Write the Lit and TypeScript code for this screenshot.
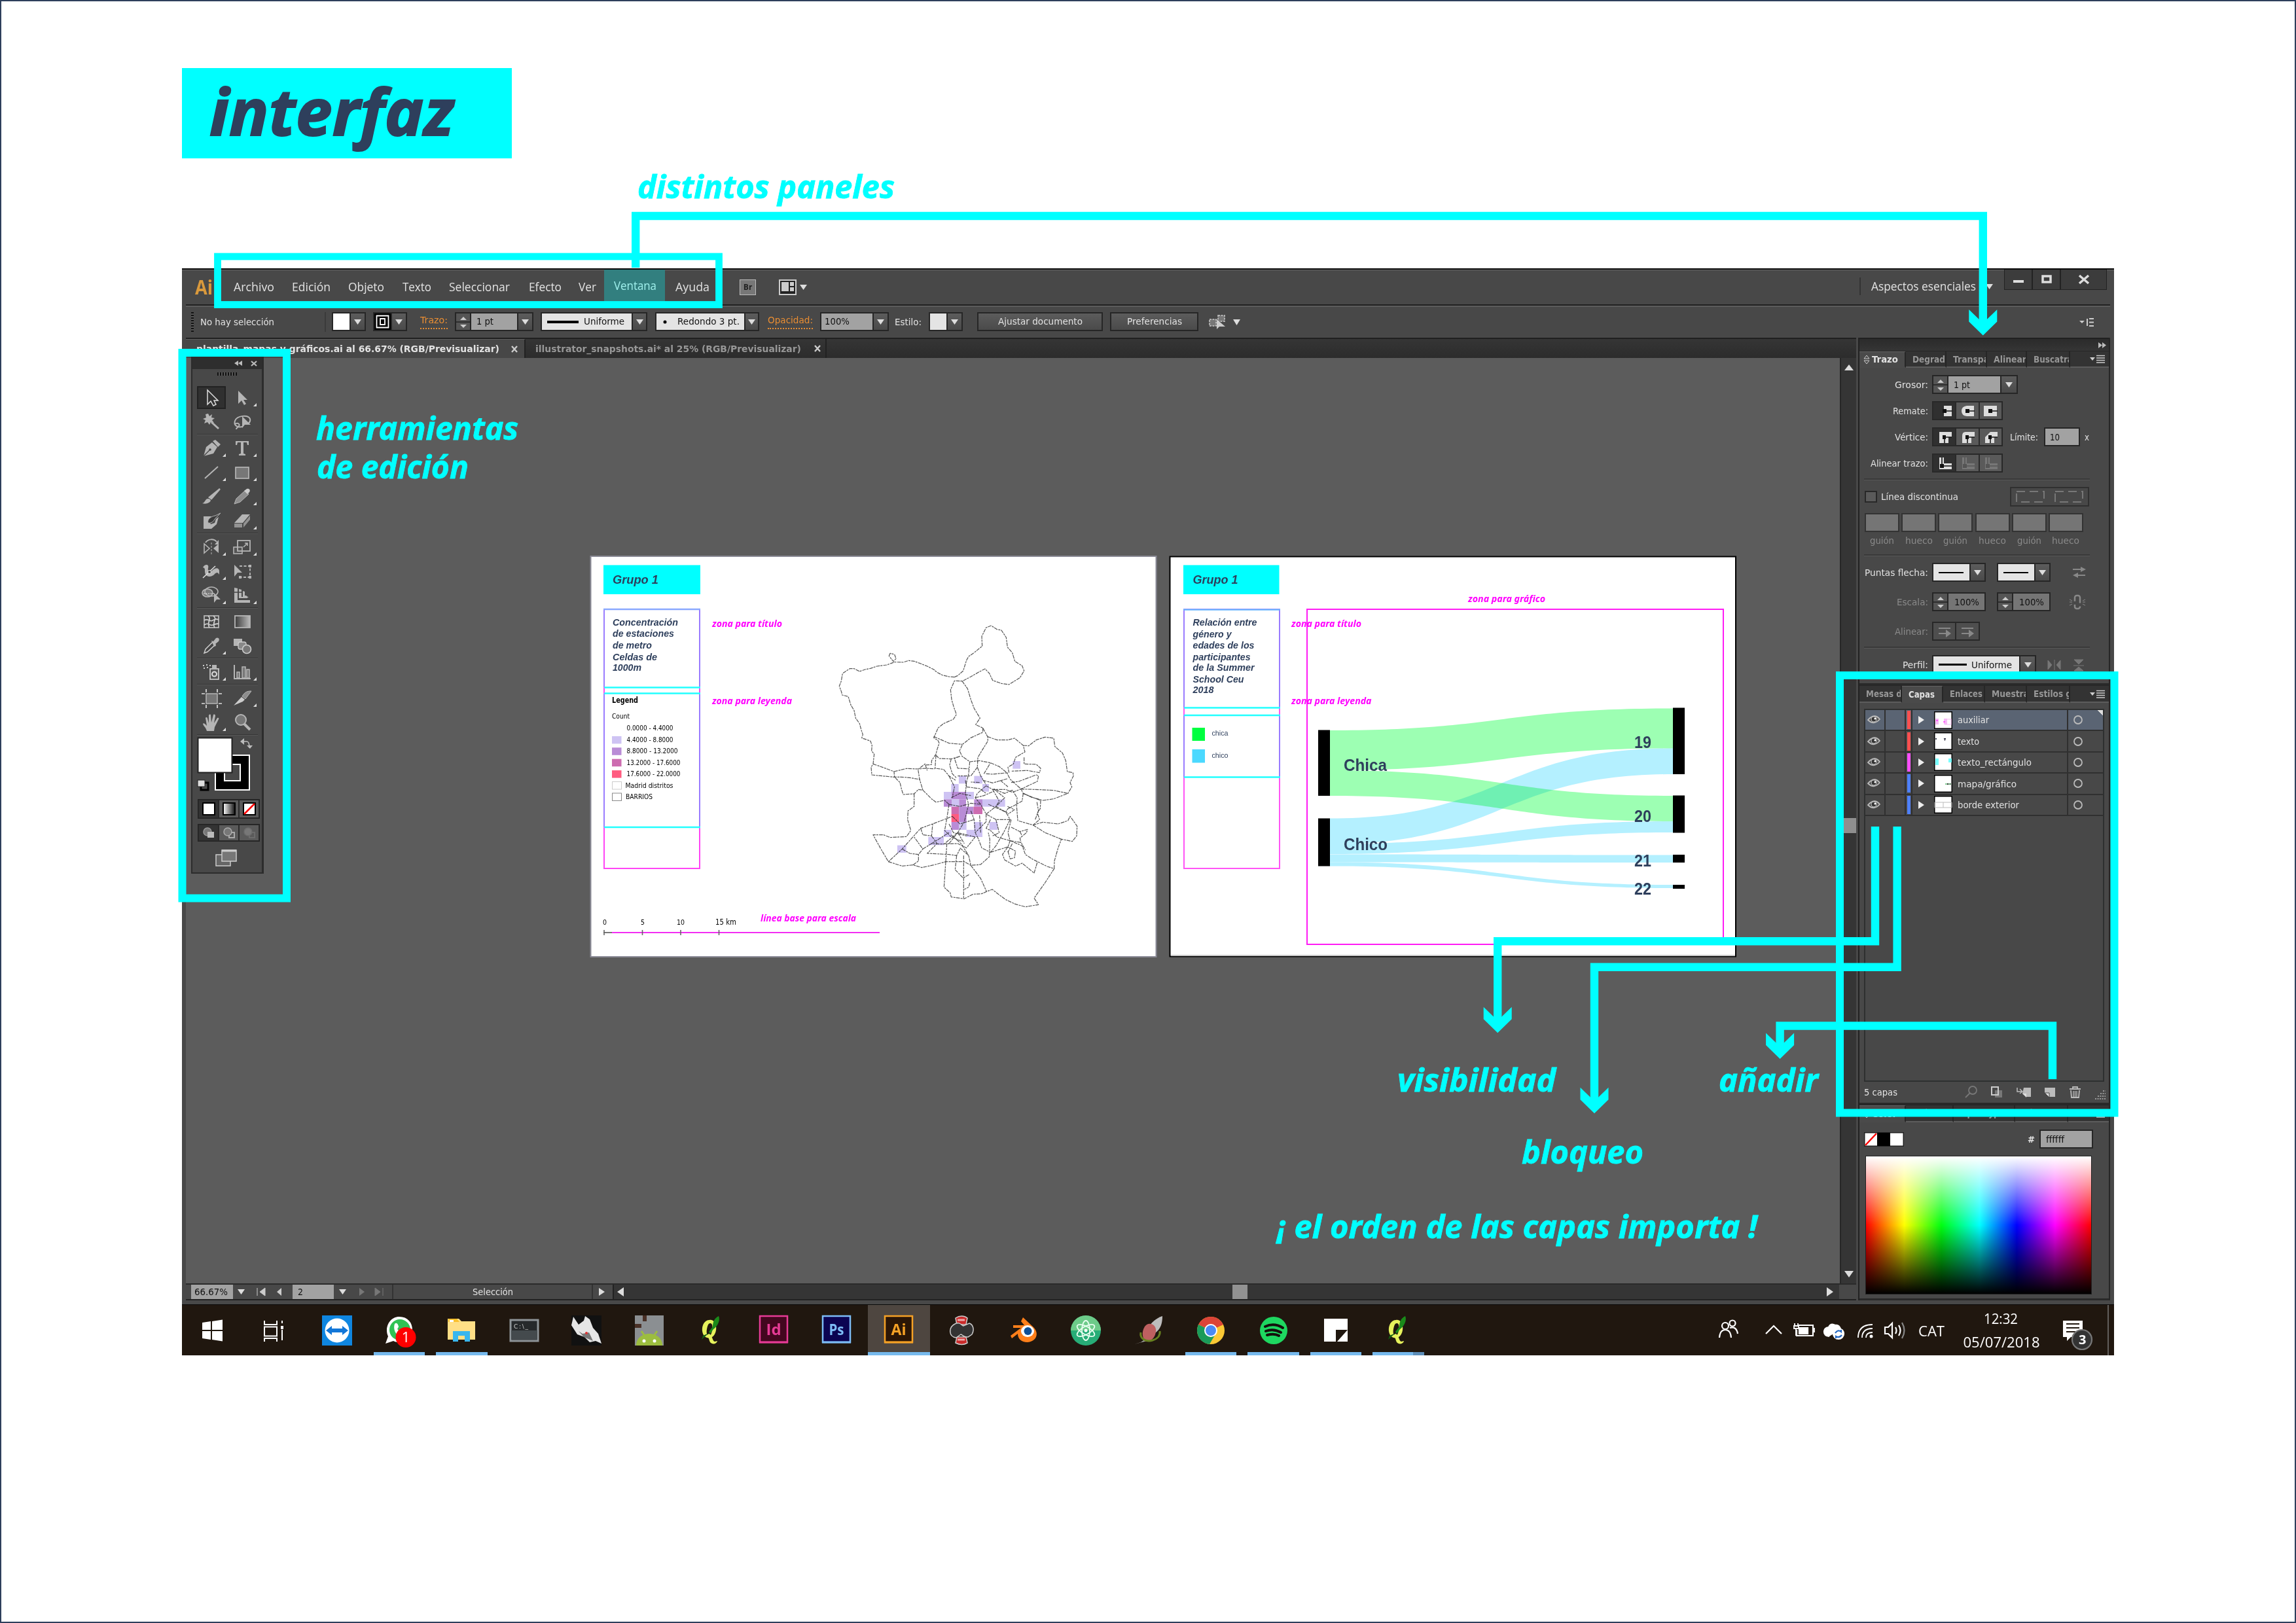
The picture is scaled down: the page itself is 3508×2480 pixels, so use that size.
import { LitElement, html, css, svg, nothing } from "lit";
import { customElement } from "lit/decorators.js";

/* Single line of text fitted to a given width; the baseline sits so that capitals are vertically centred. */
const fit = (text: string, width: number, size = 15, cls = "ui") => html`<svg class="fit" width=${width} height=${size * 1.4} viewBox="0 0 ${width} ${size * 1.4}"><text class=${cls} x="0" y=${size * 1.06} font-size=${size} textLength=${width} lengthAdjust="spacingAndGlyphs">${text}</text></svg>`;
const st = (text: string, x: number, y: number, w: number, size: number, cls: string) => svg`<text class=${cls} x=${x} y=${y} font-size=${size} textLength=${w} lengthAdjust="spacingAndGlyphs">${text}</text>`;
const icon = (w: number, h: number, body: unknown, cls = "") => html`<svg class="ico ${cls}" width=${w} height=${h} viewBox="0 0 ${w} ${h}">${body}</svg>`;

const down = icon(11, 8, svg`<path d="M0 0h11L5.500 8z" fill="#ddd"/>`);
const cross = icon(10, 11, svg`<path d="M1 1l8 9M9 1L1 10" stroke="#ccc" stroke-width="2.400"/>`);
const menuIco = icon(24, 13, svg`<path d="M0 4h8l-4 5z" fill="#ccc"/><path d="M10 1.500h13M10 5h13M10 8.500h13M10 12h13" stroke="#ccc" stroke-width="1.500"/>`);
const spin = html`<span class="spin">${icon(22, 26, svg`<path d="M6 10h10l-5-5zM6 17h10l-5 5z" fill="#ccc"/><path d="M0 13h22" stroke="#222" stroke-width="1.500"/>`)}</span>`;

/* Tool glyphs on a 34 x 28 box. */
const G = "#b5b5b5";
const tools: unknown[] = [
  svg`<path d="M11 2v22l5-5 4 7 4-2-3-6h6z" fill="#333" stroke="#ddd" stroke-width="1.500"/>`,
  svg`<path d="M11 3v20l5-5 4 7 3-2-4-6h6z" fill=${G}/>`,
  svg`<path d="M12 1l2 4 4-3-1 5 5 1-4 3 3 4-5-1-2 4-3-4-5 2 2-5-4-2 5-2-1-5z" fill=${G}/><path d="M17 14l11 10" stroke=${G} stroke-width="3"/>`,
  svg`<path d="M18 21C8 23 4 18 6 12 9 4 26 2 29 9c1 3-1 6-4 8M6 17c4-3 8 0 6 3s-4 2-4 5" fill="none" stroke=${G} stroke-width="2"/><path d="M17 5v18l4-5h9z" fill=${G}/>`,
  svg`<path d="M5 26L9 12l9-7 8 7-6 10z" fill=${G}/><path d="M19 3l4-2 8 7-4 4z" fill=${G}/><path d="M5 26l9-9" stroke="#444" stroke-width="1.200"/><circle cx="15" cy="16" r="1.800" fill="#444"/>`,
  svg`<path d="M7 3h20v6h-2l-1-4h-5v17l3 1v2H12v-2l3-1V5h-5l-1 4H7z" fill=${G}/>`,
  svg`<path d="M7 23L27 5" stroke=${G} stroke-width="2"/>`,
  svg`<rect x="7" y="6" width="20" height="17" fill="#777" stroke=${G} stroke-width="1.700"/>`,
  svg`<path d="M30 2L17 17l-3-2z" stroke=${G} stroke-width="2.500" fill=${G}/><path d="M3 24c5-1 4-7 9-7 5 1 5 4 1 6-3 2-7 2-10 1z" fill=${G}/>`,
  svg`<path d="M5 25l3-8L21 5l6 5-13 12z" fill="#8d8d8d" stroke=${G}/><path d="M20 5l4-3c4-1 6 2 4 5l-3 3z" fill="#ccc"/>`,
  svg`<path d="M5 7h12l-4 6 3 6 6-2 2-6 4-3-3 11-8 7H5z" fill=${G}/><path d="M12 17c-2-6 5-10 11-11l8-4-8 8c-3 5-6 8-11 7z" fill="#3a3a3a" stroke=${G}/>`,
  svg`<path d="M5 17L17 4h12L18 17z" fill=${G}/><path d="M5 18h12v6H5zM19 18L29 6v6L19 24z" fill="#929292"/>`,
  svg`<path d="M6 9v14l8-7z" fill="none" stroke=${G} stroke-width="1.600"/><path d="M28 9v14l-8-7z" fill=${G}/><path d="M17 7v18" stroke=${G} stroke-dasharray="3 2"/><path d="M8 7c4-6 13-6 17-1" fill="none" stroke=${G} stroke-width="2"/><path d="M28 3v7h-6z" fill=${G}/>`,
  svg`<rect x="4" y="14" width="13" height="10" fill="#555" stroke=${G} stroke-width="1.600"/><rect x="10" y="4" width="19" height="16" fill="none" stroke=${G} stroke-width="1.800"/><path d="M19 14l6-6m-4 0h4v4" fill="none" stroke=${G} stroke-width="1.600"/>`,
  svg`<path d="M4 8c3-6 10-5 8 1-1 5 2 7 6 4 5-5 10-5 11 0v6c-3-6-6-2-9 1-6 4-13 2-13-6 0-4 0-5-3-6z" fill=${G}/><path d="M4 24L23 6" stroke="#ddd" stroke-width="1.600"/><circle cx="14" cy="15" r="2.500" fill="#444" stroke="#ddd"/>`,
  svg`<path d="M5 4v18l5-6h7z" fill=${G}/><path d="M13 6h16v17H13" fill="none" stroke=${G} stroke-width="1.800" stroke-dasharray="4 2.500"/><path d="M27 4h4v4h-4zM27 21h4v4h-4zM12 21h4v4h-4z" fill=${G}/>`,
  svg`<ellipse cx="11" cy="10" rx="8" ry="6" fill="#777" stroke=${G} stroke-width="1.600"/><ellipse cx="17" cy="8" rx="10" ry="7" fill="none" stroke=${G} stroke-width="1.600"/><path d="M5 11h16" stroke="#eee" stroke-dasharray="2 1.500"/><path d="M21 10v15l4-5h6z" fill=${G}/>`,
  svg`<path d="M5 2l5 1v18H5zM12 4l4 1v11h9v2H12zM18 7l3 1v6h2l4 3h-9zM5 21h24v4H5z" fill=${G}/><path d="M5 9h12" stroke="#444" stroke-width="1.500"/>`,
  svg`<rect x="6" y="5" width="22" height="18" fill="none" stroke=${G} stroke-width="1.800"/><path d="M6 12c6-4 8 3 13 0s5-2 9-1M6 19c6-5 8 2 13 0s5-2 9-2M12 5c6 5-3 10 2 18M20 5c7 5-3 10 2 18" fill="none" stroke="#ccc" stroke-width="1.800"/>`,
  svg`<rect x="6" y="5" width="23" height="18" fill="url(#tg)" stroke=${G} stroke-width="1.800"/>`,
  svg`<path d="M6 25l2-6L19 8l4 4-12 11z" fill="#444" stroke="#ccc" stroke-width="1.500"/><path d="M17 6l3 1 4-5c4-2 6 2 4 5l-5 4 1 3-3 1z" fill=${G}/>`,
  svg`<rect x="4" y="3" width="13" height="11" fill=${G}/><rect x="11" y="8" width="12" height="11" rx="3" fill="#888" stroke="#ccc" stroke-width="1.300"/><circle cx="24" cy="19" r="6.500" fill="#777" stroke="#ccc" stroke-width="1.600"/>`,
  svg`<path d="M4 4h2M9 3h2M5 8h2M10 7h2M14 4h2" stroke="#ccc" stroke-width="2"/><rect x="15" y="9" width="13" height="16" fill="#555" stroke="#ccc" stroke-width="1.700"/><path d="M18 3h7v5h-7z" fill=${G}/><circle cx="21.500" cy="17" r="3.500" fill="none" stroke="#ddd" stroke-width="2"/>`,
  svg`<path d="M5 3v21h25" fill="none" stroke=${G} stroke-width="2"/><path d="M9 14h4v9H9zM17 6h5v17h-5zM24 10h4v13h-4z" fill="#777" stroke=${G} stroke-width="1.500"/>`,
  svg`<rect x="9" y="7" width="17" height="15" fill="#777" stroke=${G} stroke-width="1.500"/><path d="M2 7h5M28 7h5M2 22h5M28 22h5M9 0v5M26 0v5M9 24v5M26 24v5" stroke="#ddd" stroke-width="1.700"/>`,
  svg`<path d="M4 25L16 12l5 4-3 3z" fill="#ccc"/><path d="M17 11c4-7 8-8 14-8l-9 12z" fill="#8d8d8d" stroke=${G}/>`,
  svg`<path d="M10 27c-2-7-5-7-6-11 1-2 4 1 6 3L8 7c1-2 3-1 3 1l2 7V3c1-2 3-2 3 0l1 11 3-12c2-1 3 0 3 2l-2 11 5-8c2-1 3 1 2 2l-6 12-1 6z" fill=${G}/>`,
  svg`<circle cx="15" cy="10" r="8" fill="#777" stroke=${G} stroke-width="2"/><path d="M20 16l9 9" stroke=${G} stroke-width="4"/>`,
];
const hasFlyout = [0, 1, 0, 0, 1, 1, 1, 1, 0, 1, 0, 1, 1, 1, 1, 0, 1, 1, 0, 0, 1, 0, 1, 1, 0, 1, 1, 0];
const toolGroups = [[0, 4], [4, 12], [12, 18], [18, 22], [22, 24], [24, 28]];

const layers = [
  { name: "auxiliar", w: 48, c: "#ff5050", thumb: svg`<path d="M2 11h5v9H2zM15 11h5v9h-5z" fill="#f7baf7"/><rect x="17" y="12" width="9" height="8" fill="none" stroke="#f7baf7"/><path d="M3 14h3M14 16h3" stroke="#f0f"/>` },
  { name: "texto", w: 33, c: "#ff5050", thumb: svg`<path d="M2 10h2M15 10h3M16 12h1" stroke="#445" stroke-width="2"/>` },
  { name: "texto_rectángulo", w: 113, c: "#ff4fff", thumb: svg`<path d="M2 8h5v10H2zM22 8h5v6h-5z" fill="#7ff"/>` },
  { name: "mapa/gráfico", w: 90, c: "#4f80ff", thumb: svg`<path d="M17 14h9" stroke="#8c9" stroke-width="2"/><path d="M20 14h2M24 14h1" stroke="#333" stroke-width="2"/>` },
  { name: "borde exterior", w: 94, c: "#4f80ff", thumb: svg`<path d="M1 10h26v8H1zM14 10v8" fill="none" stroke="#bbb"/>` },
];

/* Outlines of the districts, in thirds of a pixel. */
const mapLines = [
  "M625 347L600 345 570 338 545 325 530 312 500 297 470 285 440 274 415 271 390 279 350 278 315 291 270 297 240 307 215 312 190 321 165 308 145 308 112 330 106 365 97 388 107 415 110 429 138 436 150 475 165 500 172 535 190 560 198 590 205 610 200 626 240 640 247 660 245 685 257 700 252 745 243 760 246 795 262 797 345 805 380 805 420 808 467 816",
  "M330 238L325 250 345 275 357 262 350 243Z",
  "M625 347L640 340 665 318 680 270 690 252 715 235 752 205 750 160 770 120 793 111 820 128 840 132 862 165 868 210 890 235 902 275 935 295 944 318 925 350 900 365 875 381 840 376 800 362 785 330 765 309 740 322 700 345 662 365 625 364 607 405 612 450 622 485 634 518 620 540 575 560 550 580 530 625 550 638 555 650 545 680 540 700 520 730 520 748 490 750",
  "M660 365L685 400 700 450 715 490 742 535 722 565 755 580 777 620 778 640 750 685 732 715 730 760 745 800 770 840",
  "M755 580L755 600 700 625 662 655 648 685 660 710 695 735 740 730 790 740 830 757 865 785 880 815 930 860",
  "M530 620L550 628 600 650 660 655M540 705L555 720 610 722 650 710M540 705L536 765 575 770 600 800 630 820M610 722L603 750 615 790 635 810M650 710L625 720 640 765 690 767M695 735L690 790 680 830",
  "M777 620L820 635 870 635 900 627 940 660 948 690 905 715 895 745 870 760 875 785M940 660L965 662 1000 635 1040 622 1080 627 1085 665 1120 695 1135 730 1142 780 1168 785 1170 800 1155 830 1163 850 1145 880 1080 905 1030 912 980 898 940 880 930 860 1020 863 1080 866 1145 880",
  "M944 715V745L1000 747 1020 765 1015 785 960 775 885 778M885 830L920 825 1000 795 1010 800 1005 825 930 860 890 875 860 862 800 862 770 845",
  "M252 745L300 762 348 780 350 805 375 830 382 860 390 885 440 882 460 862 480 865 465 815 458 770 490 745 500 775M348 780L405 766 460 768 490 765 536 767M480 865L520 905 540 920 580 912 600 930",
  "M440 882L440 940 412 960 410 1000 425 1050 405 1078 330 1082 300 1070 252 1070 285 1130 322 1193 385 1135 425 1090 470 1040 530 1018 590 995 615 985",
  "M322 1193L385 1213 435 1208 475 1220 530 1208 585 1193 670 1193 700 1210 745 1206 785 1170 787 1090 780 1060",
  "M435 1208L460 1190 460 1160 480 1135 440 1080M385 1135L420 1155 460 1160M470 1040L480 1070 520 1075 525 1020M480 1135L520 1110 560 1112 640 1110 680 1130 720 1080M520 1075L545 1110 500 1155 600 1160 635 1165 650 1135",
  "M585 1193L577 1310 605 1335 610 1355 670 1363 710 1342 750 1340 772 1330 798 1320 830 1345 860 1367 905 1388 950 1400 1010 1390 990 1360 1040 1290 1082 1225 1050 1215 985 1183 950 1160 935 1120 880 1097 820 1080 790 1050",
  "M700 1210L745 1270 772 1330M667 1165V1360M590 1110L585 1193M635 1165L628 1230 665 1268 695 1250M650 1130L690 1165 700 1210M695 1290L690 1310 670 1320M610 1070L655 1110 690 1165",
  "M1082 1225L1083 1190 1100 1130 1115 1090 1165 1100 1185 1075 1187 1030 1155 985 1145 1005 1100 1020 1030 1012 985 1025 915 1005 910 940 912 900 890 865",
  "M985 1025L1040 1060 1115 1090M940 880L935 915 900 935 870 950 860 965 880 1000 815 1000 770 975M1020 912L1018 950 1005 970 1015 1000 985 1025M940 880L975 895 1020 912",
  "M1003 920L1010 960 995 1000M868 940L900 955 870 975M890 865L855 880 805 860M880 1000L850 1060 815 1120 790 1150 750 1130 735 1090 720 1060M790 1150L870 1125 880 1097 870 1060 885 1000",
  "M870 1125L845 1160 855 1185 905 1213 935 1200 990 1245 1005 1195M870 1145L880 1180 900 1175 905 1145 870 1125M885 1035L925 1055 960 1045 955 1060 925 1085 930 1105M925 1055L935 1075",
  "M770 845L730 880 720 900 745 930 770 975 770 1010 720 1060M680 830L675 880 690 930 670 1010 640 1060 580 1110M600 930L590 995 580 1050 610 1080 660 1100M745 930L700 925 650 940 600 930",
  "M600 800L625 850 615 900M770 790L800 792 870 785M755 820L800 832 870 812M770 975L815 940 855 900 805 860M815 940L860 965M720 900L760 890 805 870M760 790L790 740M835 820L870 850",
  "M800 862L830 915 815 940M780 930L870 970M740 980L745 1060M700 960L715 1000 720 1060M640 1060L670 1110M600 1110L640 1060 720 1080M615 985L650 1020 715 1000M600 1020L620 1060 680 1075M520 1110L600 1060M680 850L740 858 770 880M675 820L680 850M730 760L700 800 640 800M740 830L700 828",
  "M890 1110L870 1150M880 1097L930 1105 950 1140M815 1000L830 1060 800 1075M790 1000L770 1040 790 1050M610 900L650 880 700 890",
];
const cells: [number, number, number, number, string][] = [
  [892, 732, 35, 35, "a"], [645, 800, 34, 35, "a"], [715, 800, 38, 35, "a"], [610, 837, 34, 36, "a"], [753, 837, 30, 35, "a"], [576, 873, 36, 34, "a"], [612, 873, 66, 34, "b"], [678, 873, 36, 34, "a"],
  [576, 907, 36, 34, "b"], [612, 907, 34, 34, "a"], [646, 907, 32, 34, "b"], [715, 907, 38, 34, "b"], [753, 907, 104, 34, "a"], [611, 941, 35, 34, "c"], [646, 941, 66, 34, "b"], [712, 941, 41, 34, "c"],
  [611, 975, 35, 36, "d"], [646, 975, 34, 36, "b"], [611, 1011, 35, 36, "b"], [646, 1011, 34, 36, "a"], [715, 1011, 38, 36, "a"], [785, 1011, 37, 36, "a"], [576, 1047, 36, 33, "a"], [680, 1047, 73, 33, "a"], [505, 1080, 71, 37, "a"], [363, 1118, 41, 34, "a"],
];
const cellColor: Record<string, string> = { a: "#cec3f3", b: "#b98cd6", c: "#cd6cb0", d: "#ff5c80" };

const board1 = svg`
  <rect x="902.500" y="851" width="864" height="612" fill="#fff" stroke="#8a8a96" stroke-width="2"/>
  <rect x="922" y="864.500" width="148" height="44.500" fill="#0ff"/>
  ${st("Grupo 1", 936, 892.5, 70, 19, "arbi navy")}
  <g fill="none" stroke-width="2"><path d="M923 932V1328H1069V932z" stroke="#ff45f5"/><path d="M923 933V1051M923 1061V1265M1069 933V1051M1069 1061V1265" stroke="#9a7cff"/><path d="M922 932h148" stroke="#8aa8ff" stroke-width="2.500"/><path d="M923 1051.500h147M923 1060.500h147M923 1265h147" stroke="#2ff" stroke-width="2.500"/></g>
  ${[["Concentración", 100, 956.7], ["de estaciones", 94, 974.3], ["de metro", 60, 992.2], ["Celdas de", 68, 1009.5], ["1000m", 44, 1026.3]].map(([t, w, y]) => st(t as string, 936, y as number, w as number, 14.5, "arbi navy"))}
  ${st("zona para título", 1088, 958.5, 107, 13.5, "note")}
  ${st("zona para leyenda", 1088, 1077, 122, 13.5, "note")}
  ${st("Legend", 935, 1075, 40, 12.5, "ui bold")}
  ${st("Count", 935, 1098.5, 27, 11, "ui")}
  ${[["0.0000 - 4.4000", 71, ""], ["4.4000 - 8.8000", 71, "#cec3f3"], ["8.8000 - 13.2000", 78, "#b98cd6"], ["13.2000 - 17.6000", 82, "#cd6cb0"], ["17.6000 - 22.0000", 82, "#ff5c80"]].map(([t, w, c], i) => svg`${c ? svg`<rect x="935" y=${1108.5 + i * 17.4} width="14.500" height="11.500" fill=${c}/>` : nothing}${st(t as string, 957.5, 1117 + i * 17.5, w as number, 10, "ui")}`)}
  <rect x="935.500" y="1195.500" width="14" height="11.500" fill="#fff" stroke="#ccc"/><rect x="935.500" y="1213" width="14" height="11.500" fill="#fff" stroke="#888"/>
  ${st("Madrid distritos", 955.5, 1204.500, 73, 10, "ui")}
  ${st("BARRIOS", 956, 1221.7, 41, 10, "ui")}
  <path d="M922 1426h14" stroke="#777" stroke-width="2"/><path d="M935 1426h409" stroke="#f22ef2" stroke-width="2"/><path d="M923 1422v8M981.500 1422v8M1040 1422v8M1098.500 1422v8" stroke="#666" stroke-width="1.600"/>
  ${st("0", 921, 1413.5, 6, 11, "ui")}${st("5", 979, 1413.5, 6, 11, "ui")}${st("10", 1034, 1413.5, 12, 11, "ui")}${st("15 km", 1093, 1413.5, 32, 11.5, "ui")}
  ${st("línea base para escala", 1162, 1408.7, 146, 13.5, "note")}
  <g transform="translate(1250 920) scale(.33333)">
    ${cells.map(([x, y, w, h, k]) => svg`<rect x=${x} y=${y} width=${w} height=${h} fill=${cellColor[k]}/>`)}
    ${mapLines.map((d) => svg`<path d=${d} fill="none" stroke="#2c2c2c" stroke-width="3.600" stroke-dasharray="17 4 9 3" stroke-opacity=".8" stroke-linejoin="round"/>`)}
  </g>`;

const band = (a: number, b: number, c: number, d: number, fill: string) => svg`<path d="M2032 ${a}C2294 ${a} 2294 ${c} 2556 ${c}V${d}C2294 ${d} 2294 ${b} 2032 ${b}Z" fill=${fill}/>`;
const board2 = svg`
  <rect x="1787.500" y="851.500" width="864.500" height="611" fill="#fff" stroke="#000" stroke-width="2"/>
  <path d="M1789 1461h862" stroke="#c8c8c8" stroke-width="2"/>
  <rect x="1808" y="864.500" width="146.500" height="44.500" fill="#0ff"/>
  ${st("Grupo 1", 1822.5, 892.5, 69, 19, "arbi navy")}
  <g fill="none" stroke-width="2"><path d="M1809 932V1328H1955V932z" stroke="#ff55f5"/><path d="M1809 933V1082M1809 1094V1189M1955 933V1082M1955 1094V1189" stroke="#9a7cff"/><path d="M1808 932.500h148" stroke="#6ab4ff" stroke-width="2.500"/><path d="M1809 1082.500h147M1809 1094h147M1809 1188.500h147" stroke="#2ff" stroke-width="2.500"/>
  <rect x="1997" y="932" width="636" height="512" stroke="#ff1cf5"/></g>
  ${[["Relación entre", 98, 957], ["género y", 59, 974.5], ["edades de los", 94, 992.3], ["participantes", 88, 1009.5], ["de la Summer", 94, 1026.4], ["School Ceu", 78, 1043.5], ["2018", 32, 1060.2]].map(([t, w, y]) => st(t as string, 1822.5, y as number, w as number, 14.5, "arbi navy"))}
  <rect x="1821.500" y="1113" width="19.500" height="20" fill="#00ff40"/><rect x="1821.500" y="1146" width="19.500" height="20.500" fill="#4bd9ff"/>
  ${st("chica", 1851.500, 1124.5, 25, 11, "ar navy")}${st("chico", 1851.500, 1158.5, 25, 11, "ar navy")}
  ${st("zona para título", 1973, 958.5, 107, 13.5, "note")}${st("zona para leyenda", 1973, 1077, 122.5, 13.5, "note")}${st("zona para gráfico", 2243, 920.5, 118, 13.5, "note")}
  ${band(1117, 1178, 1083.5, 1144.5, "#9dffb3")}${band(1178, 1217, 1217, 1256, "#9dffb3")}
  <g class="mult">${band(1251.5, 1291, 1144.5, 1184, "#b4f0ff")}</g>
  ${band(1290.5, 1306, 1256, 1273, "#b4f0ff")}${band(1306.5, 1318.5, 1307.5, 1319, "#b4f0ff")}${band(1318.5, 1324.5, 1353, 1358, "#b4f0ff")}
  <path d="M2014 1116.500h18v100.500h-18zM2014 1251.500h18v73h-18zM2556 1082.500h18v101.500h-18zM2556 1216.500h18v57h-18zM2556 1307h18v12h-18zM2556 1353h18v6h-18z"/>
  ${st("Chica", 2053, 1178.5, 66, 25, "ar bold navy")}${st("Chico", 2053, 1300, 67, 25, "ar bold navy")}
  ${st("19", 2497, 1144, 26, 25, "ar bold navy")}${st("20", 2497, 1256.7, 26, 25, "ar bold navy")}${st("21", 2497, 1324.5, 26, 25, "ar bold navy")}${st("22", 2497, 1368, 26, 25, "ar bold navy")}`;

/* Taskbar application glyphs on a 48 x 48 box. */
const adobe = (t: string, edge: string, bg: string) => svg`<rect x="3" y="2" width="42" height="40" fill=${bg} stroke=${edge} stroke-width="2.500"/><path d="M2 42h44" stroke=${edge} stroke-width="3"/><text x="24" y="31" text-anchor="middle" class="seg" font-weight="700" font-size="23" fill=${edge} textLength="23" lengthAdjust="spacingAndGlyphs">${t}</text>`;
const qgis = svg`<path d="M21 8c-8 0-12 9-11 17s7 12 13 10 9-10 8-17-5-11-10-10zm1 5c4 0 4 6 3 11s-2 8-5 8-4-5-3-10 2-9 5-9z" fill="#e6f25c"/><path d="M20 29c6 2 5 11 9 12l4-1c-1 5-8 6-11 2-2-4-2-9-6-10z" fill="#e6f25c"/><path d="M35 2c3 6-2 16-8 20l-5 7-2-3 6-8c0-8 3-13 9-16z" fill="#1a8a1a"/><path d="M20 28l-11 10 2-6z" fill="#125e12"/>`;
const apps: { g: unknown; u?: string }[] = [
  { g: svg`<rect x="1" y="1" width="46" height="46" fill="#0f86e0"/><circle cx="24" cy="24" r="18.500" fill="#fff"/><path d="M7 24l9-7v4h16v-4l9 7-9 7v-4H16v4z" fill="#1277d8"/>` },
  { g: svg`<path d="M24 3c13 0 20 9 20 20 0 12-10 19-20 19-4 0-7-1-9-2L3 44l4-11C1 20 9 3 24 3z" fill="#fff"/><circle cx="25" cy="23" r="16" fill="#2fc254"/><path d="M17 14c3-3 5 0 6 4 0 2-3 3-1 5 3 4 6 3 8 2l5 4-3 5c-8 3-19-8-15-20z" fill="#fff"/><circle cx="34" cy="34.500" r="15.500" fill="#f00"/><text x="34" y="42" text-anchor="middle" class="seg" font-size="22" fill="#fff">1</text>`, u: "on" },
  { g: svg`<path d="M3 6h17l4 4h21v28H3z" fill="#ffdf86"/><path d="M4 6h13l4 5H4z" fill="#fbc02d"/><path d="M6 8h6v3H6z" fill="#fff"/><path d="M11 41V25h26v16h-8v-9H19v9z" fill="#38b6ee"/>`, u: "on" },
  { g: svg`<rect x="3" y="8" width="42" height="32" fill="#26292b" stroke="#8e9498" stroke-width="3"/><path d="M4 24h40v14H4z" fill="#444a4d"/><text x="8" y="21" class="ui" font-size="9" fill="#ccc" textLength="22">C:\\_</text>` },
  { g: svg`<rect x="1" y="1" width="46" height="46" fill="#111"/><path d="M4 3l8 12 8-6 2-7 7 5 5 13 8 9 5 15-9-4-9 2-8-8-11-4-9-14z" fill="#e6e6e6"/><path d="M12 25l8 9 14 6-6-13-10 2z" fill="#777"/><circle cx="24" cy="28" r="2" fill="#d33"/>` },
  { g: svg`<rect x="2" y="1" width="44" height="46" fill="#8b8f92"/><path d="M14 1h6v9h-6zM2 14h10v6H2z" fill="#4a3026"/><path d="M4 47c0-24 40-24 40 0z" fill="#9cbd3f"/><path d="M12 25l5 7M36 25l-5 7" stroke="#9cbd3f" stroke-width="3"/><circle cx="16" cy="40" r="2.500" fill="#fff"/><circle cx="32" cy="40" r="2.500" fill="#fff"/>` },
  { g: qgis },
  { g: adobe("Id", "#e63b96", "#43071f") },
  { g: adobe("Ps", "#7dbdf7", "#0b0452") },
  { g: adobe("Ai", "#f5a125", "#2b1606"), u: "active" },
  { g: svg`<g stroke="#ccc" stroke-width="1.500"><path d="M15 5c6-4 13-4 18 0l-2 10H17z" fill="#c92a2a"/><path d="M15 43c6 3 13 3 18 0l-2-9H17z" fill="#c92a2a"/><path d="M14 14c7-4 10 2 13 3l9-4c6 2 8 10 4 17l-6 4c-6 1-8-3-11-4l-7 5C4 34 4 19 14 14z" fill="#333"/></g><path d="M18 8h11M18 38h11" stroke="#fff" stroke-opacity=".6" stroke-width="3"/>` },
  { g: svg`<path d="M4 32l16-12H8v-4h17l-5-6 3-6 16 15c9 9 5 22-9 23-10 0-15-6-15-13l-9 7z" fill="#ff7f1a"/><ellipse cx="30" cy="25" rx="10" ry="9" fill="#fff"/><circle cx="30.500" cy="25" r="6" fill="#0f4f96"/>` },
  { g: svg`<circle cx="24" cy="24" r="23" fill="#27ad77"/><path d="M1 24a23 23 0 0146 0z" fill="#86d68f" fill-opacity=".75"/><g fill="none" stroke="#e8fff0" stroke-width="1.800"><ellipse cx="24" cy="24" rx="6" ry="15"/><ellipse cx="24" cy="24" rx="6" ry="15" transform="rotate(60 24 24)"/><ellipse cx="24" cy="24" rx="6" ry="15" transform="rotate(-60 24 24)"/></g><circle cx="24" cy="24" r="2.500" fill="#fff"/>` },
  { g: svg`<path d="M45 2c0 15-5 23-15 28l-7-9C27 12 36 5 45 2z" fill="#bdbdbd"/><path d="M21 40L2 45l10-3 13-9z" fill="#aaa"/><path d="M18 18c6-9 19-3 17 8-1 9-8 16-16 15-5-6-6-15-1-23z" fill="#bf6060"/><path d="M12 27c-2 10 9 15 18 12 7-2 12-7 11-14" fill="none" stroke="#67801f" stroke-width="3"/>` },
  { g: svg`<circle cx="24" cy="24" r="21" fill="#fbc834"/><path d="M24 24L5 15A21 21 0 0143 15z" fill="#dc4437"/><path d="M24 24L5 15a21 21 0 0017 30l10-17z" fill="#1a9b5a"/><circle cx="24" cy="24" r="10" fill="#fff"/><circle cx="24" cy="24" r="8" fill="#4a8af4"/>`, u: "on" },
  { g: svg`<circle cx="24" cy="24" r="21" fill="#1ed760"/><path d="M11 18c9-4 19-3 27 2M12 25c8-3 16-2 23 2M14 31c7-2 13-2 18 1" fill="none" stroke="#14100c" stroke-width="4" stroke-linecap="round"/>`, u: "on" },
  { g: svg`<path d="M6 6h36v17H24v18H6z" fill="#fff"/><path d="M42 23L26 41h16z" fill="#fff"/>`, u: "on" },
  { g: qgis, u: "multi" },
];

const capIcons = [
  svg`<path d="M16 5h12v16H16zM14 10v6" fill="#ddd"/><path d="M18 13h11" stroke="#111" stroke-width="1.500"/><rect x="14" y="10" width="6" height="6" fill="#111"/>`,
  svg`<path d="M16 5h11v16H16q-8-1-8-8t8-8z" fill="#ddd"/><path d="M17 13h11" stroke="#111" stroke-width="1.500"/><rect x="14" y="10" width="6" height="6" fill="#111"/>`,
  svg`<path d="M7 5h20v16H7z" fill="#ddd"/><path d="M17 13h11" stroke="#111" stroke-width="1.500"/><rect x="14" y="10" width="6" height="6" fill="#111"/>`,
];
const joinIcons = ["M9 5h19v8h-5v9H9z", "M14 5h14v8h-5v9H9v-11q0-6 5-6z", "M17 5h11v8h-5v9H9v-9z"].map((d) => svg`<path d=${d} fill="#ddd"/><path d="M17 22v-9h11" fill="none" stroke="#111" stroke-width="1.500"/><rect x="14" y="10" width="5" height="6" fill="#111"/>`);
const alignIcons = ["#ddd", "#777", "#777"].map((c) => svg`<path d="M9 4h7v9h12v9H9z" fill=${c}/><path d="M13 4v13h15" fill="none" stroke=${c === "#ddd" ? "#111" : "#555"} stroke-width="1.600"/><rect x="10" y="14" width="6" height="6" fill=${c === "#ddd" ? "#111" : "#555"}/>`);
const trio = (list: unknown[], off = false) => html`<span class="trio">${list.map((g, i) => html`<span class="btn ${i === 0 ? "sel" : ""} ${off ? "off" : ""}">${icon(34, 26, g)}</span>`)}</span>`;

@customElement("app-root")
export class AppRoot extends LitElement {
  static styles = css`
    :host { display: block; width: 3508px; height: 2480px; background: #fff; }
    * { box-sizing: border-box; }
    .page { position: relative; width: 3508px; height: 2480px; border: 2px solid #2e3f5c; padding: 102px 0 0 276px; overflow: hidden; }
    .fit, .ico { display: block; flex: none; overflow: visible; }
    .defs { display: block; position: absolute; }
    .mult { mix-blend-mode: multiply; }
    .fit text { fill: #e2e2e2; }
    text.ui { font-family: "DejaVu Sans", "Noto Sans", sans-serif; }
    text.seg, text.menu, text.clock, text.logo { font-family: "Open Sans", "Noto Sans", sans-serif; }
    text.clock { fill: #fff; }
    text.bold { font-weight: 700; }
    .fit text.dim { fill: #979797; font-weight: 700; }
    .fit text.off { fill: #8a8a8a; }
    .fit text.dark { fill: #111; }
    .fit text.orange { fill: #e88d33; }
    .fit text.teal { fill: #9ff0ec; }
    .fit text.logo { fill: #d9993c; font-weight: 700; }
    text.ar { font-family: "Liberation Sans", sans-serif; }
    text.arbi { font-family: "Liberation Sans", sans-serif; font-weight: 700; font-style: italic; }
    text.note, text.cy { font-family: "Noto Sans", sans-serif; font-weight: 700; font-style: italic; fill: #f0f; }
    text.cy { fill: #0ff; stroke: #0ff; stroke-width: .8px; }
    text.navy { fill: #2e3f5c; }
    text.cy.navy { stroke: #2e3f5c; stroke-width: 2px; }
    .title { width: 504px; height: 138px; background: #0ff; }
    .shot { margin-top: 168px; width: 2952px; height: 1661px; display: flex; flex-direction: column; background: #484848; }
    .menubar { height: 55px; border-top: 2px solid #0a0a0a; box-shadow: inset 0 1px #6a6a6a; padding-left: 20px; display: flex; align-items: flex-start; }
    .menus { display: grid; grid-template-columns: 59px 89px 86px 83px 71px 122px 76px 39px 93px 16px; height: 53px; align-items: center; }
    .ventana { background: #327f7f; height: 49px; width: 93px; padding-left: 15px; display: flex; align-items: center; align-self: start; }
    .apptools { display: flex; align-items: center; gap: 5px; height: 53px; }
    .br { width: 25px; height: 24px; border: 1px solid #bbb; background: #777; margin-right: 30px; display: flex; align-items: center; justify-content: center; }
    .br .fit text { fill: #222; }
    .ws { margin-left: auto; display: flex; align-items: center; gap: 15px; padding-left: 16px; height: 27px; margin-top: 12px; border-left: 2px solid #333; width: 221px; }
    .winbtns { width: 157px; height: 31px; display: grid; grid-template-columns: 43px 43px 71px; background: #292929; margin-right: 11px; border-radius: 0 0 4px 4px; }
    .winbtns span { display: flex; justify-content: center; align-items: center; border: 1.500px solid #222; border-top: none; background: #3c3c3c; }
    .control { height: 51px; margin: 0 6px; border-top: 2px solid #222; box-shadow: inset 0 2px #5c5c5c; padding: 10px 0 0 8px; display: grid; grid-template-columns: 14px 201px 63px 72px 53px 131px 175px 172px 80px 114px 52px 74px 203px 151px 1fr 47px; align-items: start; }
    .control > * { height: 30px; }
    .vc { display: flex; align-items: center; }
    .grip { width: 4px; background: repeating-linear-gradient(#111 0 2px, #555 2px 4px); }
    .label1 { border-right: 2px solid #3a3a3a; width: 192px; }
    .combo { display: inline-flex; height: 29px; border: 2px solid #262626; background: #555; }
    .face { height: 100%; display: flex; align-items: center; background: #e4e4e4; border-right: 2px solid #262626; }
    .dd { flex: 1; display: flex; align-items: center; justify-content: center; background: linear-gradient(#5c5c5c, #4a4a4a); }
    .spin { width: 23px; height: 100%; background: #555; border-right: 2px solid #262626; display: block; flex: none; }
    .gray { background: #a2a2a2; }
    .mid { background: #757575; }
    .white { background: #fff; }
    .control .under { border-bottom: 2px dotted #e88d33; height: 26px; width: max-content; }
    .push { display: flex; justify-content: center; align-items: center; height: 29px; border: 2px solid #262626; background: linear-gradient(#5c5c5c, #4a4a4a); }
    .w52 { width: 52px; } .w120 { width: 120px; } .w163 { width: 163px; } .w159 { width: 159px; } .w105 { width: 105px; } .w192 { width: 192px; } .w135 { width: 135px; } .w130 { width: 131px; } .w82 { width: 82px; } .w159p { width: 159px; }
    .f27 { width: 27px; } .f73 { width: 72px; } .f139 { width: 139px; } .f135 { width: 136px; } .f80 { width: 80px; } .f81 { width: 81px; } .f57 { width: 57px; } .f133 { width: 133px; }
    .p8 { padding-left: 8px; }
    .body { flex: 1; min-height: 0; display: grid; grid-template-columns: 2552px 385px; column-gap: 3px; padding-left: 6px; }
    .main { display: grid; grid-template-rows: 31px 1414px 26px; height: 1471px; }
    .doctabs { background: linear-gradient(#353535, #2c2c2c); border-top: 2px solid #202020; display: flex; }
    .doctab { display: flex; align-items: center; border-right: 2px solid #222; padding-left: 16px; gap: 18px; }
    .doctab.on { background: #474747; width: 519px; border-top: 1px solid #5e5e5e; }
    .doctab.idle { width: 460px; gap: 20px; padding-left: 15px; }
    .work { display: grid; grid-template-columns: 2527px 25px; }
    .canvas { position: relative; background: #5c5c5c; padding: 301px 0 0 616px; display: flex; gap: 18px; }
    .boards { flex: none; display: block; }
    .vs { background: #353535; border-left: 2px solid #272727; display: flex; flex-direction: column; align-items: center; padding: 10px 0 9px; }
    .vthumb { margin: 684px 0 auto 2px; width: 20px; height: 23px; background: #8f8f8f; }
    .status { display: grid; grid-template-columns: 71px 29px 31px 24px 63px 39px 24px 26px 307px 30px 1fr 26px; align-items: stretch; background: #484848; border-top: 2px solid #2a2a2a; padding-left: 8px; border-bottom: 2px solid #222; }
    .status > span { display: flex; align-items: center; }
    .zoomf { padding-left: 5px; width: 64px; }
    .sel1 { border-left: 2px solid #333; border-right: 2px solid #333; justify-content: center; }
    .hs { background: #353535; border-left: 2px solid #222; justify-content: space-between; padding: 0 9px 0 5px; }
    .hthumb { width: 23px; height: 100%; background: #929292; margin-left: 45px; }
    .toolbox { position: absolute; left: 8px; top: -3px; width: 111px; height: 791px; background: #484848; border: 2px solid #2c2c2c; border-right-width: 3px; }
    .thead { height: 18px; background: #2e2e2e; display: flex; justify-content: flex-end; align-items: center; gap: 13px; padding-right: 7px; }
    .tgrip { width: 30px; height: 5px; margin: 5px auto 13px; background: repeating-linear-gradient(90deg, #111 0 2px, #555 2px 4px); }
    .tg { margin: 0 6px 0 7px; padding-top: 2px; display: grid; grid-template-columns: 47px 47px; grid-auto-rows: 37px; border-bottom: 1px solid #353535; box-shadow: 0 1px #585858; }
    .tool { display: flex; align-items: center; justify-content: center; position: relative; width: 44px; height: 35px; margin-top: 1px; }
    .tool.sel { background: #303030; border: 2px solid #222; }
    .fly { position: absolute; right: 0; bottom: 4px; }
    .paint { display: block; margin: 3px 0 0 5px; }
    .threes { display: grid; grid-template-columns: 31px 31px 31px; margin: 7px 0 0 8px; border: 1px solid #222; width: 95px; }
    .threes span { display: flex; align-items: center; justify-content: center; height: 28px; background: #5a5a5a; border: 1px solid #2a2a2a; }
    .threes span:first-child { background: #333; }
    .threes.low { margin-top: 8px; }
    .threes.low span { height: 25px; }
    .screen { display: block; margin: 11px auto 0 35px; }
    .dock { display: grid; grid-template-rows: 20px 511px 641px 299px; height: 1471px; background: #484848; border-left: 2px solid #222; border-right: 2px solid #262626; }
    .dhead { background: linear-gradient(#2b2b2b, #353535); border-top: 2px solid #202020; display: flex; justify-content: flex-end; align-items: center; padding-right: 4px; }
    .panel { border-bottom: 3px solid #292929; overflow: hidden; }
    .ptabs { height: 26px; display: grid; background: #333; border-top: 1px solid #262626; }
    .t1 { grid-template-columns: 71px 62px 62px 61px 66px 1fr; }
    .t2 { grid-template-columns: 65px 63px 64px 64px 66px 1fr; height: 27px; }
    .t3 { grid-template-columns: 71px 73px 94px 81px 1fr; height: 27px; }
    .ptab { border-right: 2px solid #262626; border-bottom: 2px solid #5c5c5c; display: flex; align-items: center; padding-left: 10px; overflow: hidden; }
    .ptab.on { background: #4a4a4a; border-bottom-color: #4a4a4a; border-top: 1px solid #646464; gap: 4px; }
    .ptab.l8 { padding-left: 7px; }
    .ptab.last { border-right: none; justify-content: flex-end; padding-right: 5px; }
    .row { display: grid; grid-template-columns: 105px 1fr; column-gap: 6px; height: 29px; align-items: center; }
    .row > .lab { justify-self: end; }
    .row > .cont { display: flex; align-items: center; height: 29px; }
    .r1 { margin-top: 11px; } .r2 { margin-top: 11px; } .r4 { margin-top: 16px; } .r5 { margin-top: 16px; }
    .trio { display: flex; border: 1px solid #262626; }
    .btn { width: 35.400px; height: 27px; border: 1px solid #2a2a2a; background: #5a5a5a; display: flex; align-items: center; justify-content: center; }
    .btn.sel { background: #303030; }
    .btn.off { background: #4e4e4e; }
    .lim { margin: 0 9px 0 11px; }
    .field { border: 2px solid #262626; height: 29px; width: 55px; padding-left: 7px; display: flex; align-items: center; margin-right: 7px; }
    .hr { margin: 9px 29px 0 7px; height: 2px; background: #393939; box-shadow: 0 1px #585858; }
    .dashrow { display: flex; align-items: center; margin: 11px 0 0 8px; height: 30px; }
    .check { width: 19px; height: 18px; border: 2px solid #282828; background: #5a5a5a; margin-right: 6px; }
    .dbl { display: flex; margin-left: 79px; border: 2px solid #303030; height: 30px; width: 121px; justify-content: space-around; align-items: center; }
    .six { display: grid; grid-template-columns: repeat(6, 53px); column-gap: 3.200px; margin: 10px 0 0 8px; }
    .six .box { height: 29px; border: 2px solid #333; background: #757575; }
    .six .cap { display: flex; justify-content: center; height: 25px; align-items: center; }
    .g17 { margin-left: 17px; }
    .list { margin: 9px 0 0 7px; width: 367px; height: 570px; border: 2px solid #2e3030; }
    .layer { display: grid; grid-template-columns: 31px 31px 10px 33px 36px 169px 1fr; height: 32.400px; border-bottom: 2px solid #303030; align-items: center; }
    .layer.on { background: #5a6473; background-image: linear-gradient(225deg, #ddd 6px, transparent 6px); }
    .layer > span { display: flex; align-items: center; height: 100%; }
    .vline { border-right: 2px solid #303030; }
    .chip { width: 5px; height: 28px; margin: 0 auto; }
    .arrow { padding-left: 8px; }
    .foot { display: flex; align-items: center; height: 32px; padding-left: 7px; }
    .foot .fit { margin-right: 102px; }
    .foot .ico { margin-right: 15.500px; }
    .hexrow { display: flex; align-items: center; margin: 11px 0 0 7px; height: 29px; }
    .sw { margin-right: 189px; }
    .spectrum { margin: 11px 0 0 9px; width: 346px; height: 212px; border: 1px solid #222; background: linear-gradient(#fff, transparent 50%), linear-gradient(transparent 50%, #000), linear-gradient(90deg, #f00, #ff0 17%, #0f1 33.500%, #0ff 50.500%, #00f 67%, #f0f 84%, #f00); }
    .frame { height: 5px; background: #484848; border-bottom: 1px solid #0a0a0a; }
    .taskbar { height: 77px; background: #20170f; display: flex; color: #fff; overflow: hidden; }
    .cell { width: 95.400px; display: flex; flex-direction: column; align-items: center; }
    .cell .ico { margin-top: 15px; }
    .cell.sys { width: 94.500px; }
    .cell.active { background: #4e4640; }
    .bar { margin-top: auto; height: 5px; width: 78.500px; background: #76b9ed; }
    .cell.active .bar { width: 100%; }
    .cell.multi .bar { background: linear-gradient(90deg, #76b9ed 79%, #5c8db8 79%); }
    .tray { margin-left: 435px; padding-top: 5px; }
    .overlay { position: absolute; left: -2px; top: -2px; }
  `;

  private control() {
    const dd = html`<span class="dd">${down}</span>`;
    return html`<div class="control">
      <span class="grip"></span>
      <span class="vc label1">${fit("No hay selección", 113, 14.5)}</span>
      <span class="combo w52"><span class="face white f27"></span>${dd}</span>
      <span class="combo w52"><span class="face f27">${icon(25, 25, svg`<path d="M0 0h25v25H0z"/><path d="M3.500 3.500h18v18h-18zM9 8h7v9H9z" fill="none" stroke="#fff" stroke-width="1.800"/>`)}</span>${dd}</span>
      <span class="vc under">${fit("Trazo:", 42, 14.5, "ui orange")}</span>
      <span class="combo w120">${spin}<span class="face gray f73 p8">${fit("1 pt", 26, 14.5, "ui dark")}</span>${dd}</span>
      <span class="combo w163"><span class="face f139 p8">${icon(56, 6, svg`<path d="M0 1h48v4H0z"/>`)}${fit("Uniforme", 62, 14.5, "ui dark")}</span>${dd}</span>
      <span class="combo w159"><span class="face f135 p8">${icon(24, 6, svg`<circle cx="5" cy="3" r="2.500"/>`)}${fit("Redondo 3 pt.", 95, 14.5, "ui dark")}</span>${dd}</span>
      <span class="vc under">${fit("Opacidad:", 69, 14.5, "ui orange")}</span>
      <span class="combo w105"><span class="face gray f80">${icon(5, 5, nothing)}${fit("100%", 38, 14.5, "ui dark")}</span>${dd}</span>
      <span class="vc">${fit("Estilo:", 41, 14.5)}</span>
      <span class="combo w52"><span class="face f27"></span>${dd}</span>
      <span class="push w192">${fit("Ajustar documento", 129, 14.5)}</span>
      <span class="push w135">${fit("Preferencias", 84, 14.5)}</span>
      <span class="vc">${icon(50, 24, svg`<path d="M1 8h10v10H1zM14 2h10v9H14z" fill="#777" stroke="#ccc" stroke-width="1.500" stroke-dasharray="3 1.500"/><path d="M12 8v15l4-4h9z" fill="#ccc"/><path d="M37 8h11l-5.500 9z" fill="#ddd"/>`)}</span>
      <span class="vc">${icon(22, 14, svg`<path d="M0 5h8L4 9z" fill="#ccc"/><path d="M12 2v11M15 2h7M15 7.500h7M15 13h7" stroke="#ccc" stroke-width="2"/>`)}</span>
    </div>`;
  }

  private toolbox() {
    return html`<div class="toolbox">
      <div class="thead">${icon(12, 8, svg`<path d="M6 0v8L0 4zM12 0v8L6 4z" fill="#bbb"/>`)}${icon(10, 9, svg`<path d="M1 1l8 7M9 1L1 8" stroke="#bbb" stroke-width="2.200"/>`)}</div>
      <div class="tgrip"></div>
      ${toolGroups.map(([a, b]) => html`<div class="tg">${tools.slice(a, b).map((g, i) => html`<span class="tool ${a + i === 0 ? "sel" : ""}">${icon(34, 28, g)}${hasFlyout[a + i] ? html`<svg class="fly" width="5" height="5"><path d="M5 0v5H0z" fill="#ddd"/></svg>` : nothing}</span>`)}</div>`)}
      ${icon(100, 88, svg`<rect x="30" y="28" width="52" height="53" fill="#000" stroke="#fff" stroke-width="2"/><rect x="44" y="42" width="24" height="25" fill="#484848" stroke="#fff" stroke-width="2"/><rect x="3.500" y="1.500" width="52" height="53" fill="#fff" stroke="#222" stroke-width="2"/><path d="M70 7h8q4 0 4 10" fill="none" stroke="#bbb" stroke-width="1.600"/><path d="M74 2v10l-6-5zM78 13h9l-4 5z" fill="#bbb"/><rect x="8" y="70" width="11" height="11" fill="none" stroke="#000" stroke-width="3"/><rect x="3" y="66" width="11" height="10" fill="#ddd" stroke="#222"/>`, "paint")}
      <div class="threes"><span>${icon(20, 20, svg`<rect x="1" y="1" width="18" height="18" fill="#fff" stroke="#000" stroke-width="2"/>`)}</span><span>${icon(20, 20, svg`<rect x="1" y="1" width="18" height="18" fill="url(#wg)" stroke="#000" stroke-width="2"/>`)}</span><span>${icon(20, 20, svg`<rect x="1" y="1" width="18" height="18" fill="#fff" stroke="#000" stroke-width="2"/><path d="M2 18L18 2" stroke="red" stroke-width="2.500"/>`)}</span></div>
      <div class="threes low">${[["#999", 1], ["#aaa", 0], ["#6c6c6c", 0]].map(([c, r]) => html`<span>${icon(18, 18, svg`<circle cx="7" cy="7" r="6" fill="#777" stroke=${c} stroke-width="1.500"/>${r ? svg`<rect x="7" y="7" width="10" height="9" fill="#bbb"/>` : svg`<path d="M12 8h5v8H9v-3" fill="none" stroke=${c} stroke-width="2"/>`}`)}</span>`)}</div>
      ${icon(33, 28, svg`<rect x="1" y="9" width="22" height="17" fill="#666" stroke="#ccc" stroke-width="1.500"/><rect x="10" y="2" width="22" height="17" fill="#777" stroke="#ccc" stroke-width="1.500"/><path d="M10 3h22" stroke="#ccc" stroke-width="3"/>`, "screen")}
    </div>`;
  }

  private strokePanel() {
    const dd = html`<span class="dd">${down}</span>`;
    const off = "#777";
    return html`<div class="panel">
      <div class="ptabs t1">
        <span class="ptab on l8">${icon(8, 13, svg`<path d="M0 5h8L4 0zM0 8h8l-4 5z" fill="none" stroke="#ccc"/>`)}${fit("Trazo", 40, 14, "ui bold")}</span>
        <span class="ptab">${fit("Degrad", 50, 14, "ui dim")}</span><span class="ptab">${fit("Transpa", 55, 14, "ui dim")}</span><span class="ptab">${fit("Alinear", 50, 14, "ui dim")}</span><span class="ptab">${fit("Buscatra", 60, 14, "ui dim")}</span><span class="ptab last">${menuIco}</span>
      </div>
      <div class="row r1"><span class="lab">${fit("Grosor:", 51, 14)}</span><span class="cont"><span class="combo w130">${spin}<span class="face gray f81 p8">${fit("1 pt", 25, 14, "ui dark")}</span>${dd}</span></span></div>
      <div class="row r2"><span class="lab">${fit("Remate:", 54, 14)}</span><span class="cont">${trio(capIcons)}</span></div>
      <div class="row r2"><span class="lab">${fit("Vértice:", 51, 14)}</span><span class="cont">${trio(joinIcons)}<span class="lim">${fit("Límite:", 43, 14)}</span><span class="field gray">${fit("10", 15, 14, "ui dark")}</span>${fit("x", 7, 14)}</span></div>
      <div class="row r2"><span class="lab">${fit("Alinear trazo:", 88, 14)}</span><span class="cont">${trio(alignIcons)}</span></div>
      <div class="hr"></div>
      <div class="dashrow"><span class="check"></span>${fit("Línea discontinua", 118, 14)}<span class="dbl">${[0, 1].map(() => icon(44, 18, svg`<rect x="1" y="1" width="42" height="16" fill="none" stroke=${off} stroke-width="2" stroke-dasharray="13 7"/>`))}</span></div>
      <div class="six">${[0, 1, 2, 3, 4, 5].map(() => html`<span class="box"></span>`)}${[0, 1, 2, 3, 4, 5].map((i) => html`<span class="cap">${i % 2 ? fit("hueco", 42, 14, "ui off") : fit("guión", 37, 14, "ui off")}</span>`)}</div>
      <div class="hr"></div>
      <div class="row r1"><span class="lab">${fit("Puntas flecha:", 97, 14)}</span><span class="cont">${[0, 1].map((i) => html`<span class="combo w82 ${i ? "g17" : ""}"><span class="face f57 p8">${icon(38, 4, svg`<path d="M0 1h38v2H0z"/>`)}</span>${dd}</span>`)}${icon(54, 18, svg`<path d="M34 4h12M42 13h11" stroke="#888" stroke-width="2"/><path d="M46 0v8l8-4zM42 9v8l-8-4z" fill="#888"/>`)}</span></div>
      <div class="row r4"><span class="lab">${fit("Escala:", 48, 14, "ui off")}</span><span class="cont">${[0, 1].map((i) => html`<span class="combo w82 ${i ? "g17" : ""}">${spin}<span class="dd mid">${fit("100%", 38, 14, "ui dark")}</span></span>`)}${icon(54, 24, svg`<rect x="37" y="2" width="8" height="20" rx="3" fill="none" stroke="#888" stroke-width="2.500" stroke-dasharray="15 5"/><path d="M29 8l4 2M29 12h4M29 17l4-2M49 10l4-2M49 12h4M49 15l4 2" stroke="#888"/>`)}</span></div>
      <div class="row r5"><span class="lab">${fit("Alinear:", 51, 14, "ui off")}</span><span class="cont">${trio([0, 1].map(() => svg`<path d="M8 8h18M8 16h12" stroke="#888" stroke-width="2"/><path d="M19 10v12l8-6z" fill="#888"/>`), true)}</span></div>
      <div class="hr"></div>
      <div class="row r1"><span class="lab">${fit("Perfil:", 39, 14)}</span><span class="cont"><span class="combo w159p"><span class="face f133 p8">${icon(50, 4, svg`<path d="M0 0h43v3H0z"/>`)}${fit("Uniforme", 62, 14, "ui dark")}</span>${dd}</span>${icon(76, 22, svg`<path d="M18 4v14l6-7zM37 4v14l-6-7zM28 3v16" fill="#777" stroke="#777"/><path d="M58 3h14l-7 7zM57 12h16M58 20h14l-7-6z" fill="#777" stroke="#777"/>`)}</span></div>
    </div>`;
  }

  private layersPanel() {
    return html`<div class="panel">
      <div class="ptabs t2">
        <span class="ptab">${fit("Mesas de", 63, 14, "ui dim")}</span><span class="ptab on">${fit("Capas", 40, 14, "ui bold")}</span><span class="ptab">${fit("Enlaces", 50, 14, "ui dim")}</span><span class="ptab">${fit("Muestra", 57, 14, "ui dim")}</span><span class="ptab">${fit("Estilos gr", 64, 14, "ui dim")}</span><span class="ptab last">${menuIco}</span>
      </div>
      <div class="list">${layers.map((l, i) => html`<div class="layer ${i === 0 ? "on" : ""}">
        <span class="vline">${icon(28, 20, svg`<path d="M4 10q10-11 18-1-9 10-18 1z" fill="#555" stroke="#bbb" stroke-width="1.800"/><circle cx="13" cy="9" r="4" fill="#333" stroke="#bbb"/><circle cx="15" cy="8" r="1.600" fill="#fff"/>`)}</span>
        <span class="vline"></span><span class="vline"><span class="chip" style="background:${l.c}"></span></span>
        <span class="arrow">${icon(10, 14, svg`<path d="M1 1l9 6-9 6z" fill="#eee"/>`)}</span>
        <span>${icon(28, 27, svg`<rect x=".750" y=".750" width="26.500" height="25.500" fill="#fff" stroke="#000" stroke-width="1.500"/>${l.thumb}`)}</span>
        <span class="vline">${fit(l.name, l.w, 14)}</span>
        <span>${icon(24, 16, svg`<circle cx="15" cy="8" r="6" fill="none" stroke="#bbb" stroke-width="1.800"/>`)}</span>
      </div>`)}</div>
      <div class="foot">${fit("5 capas", 51, 14)}
        ${icon(22, 20, svg`<circle cx="13" cy="7" r="6" fill="none" stroke="#777" stroke-width="1.800"/><path d="M9 11l-7 7" stroke="#777" stroke-width="2"/>`)}
        ${icon(22, 20, svg`<path d="M9 7h11v11H9z" fill="#777"/><path d="M4 2h10v12H4z" fill="none" stroke="#ccc" stroke-width="2"/>`)}
        ${icon(28, 20, svg`<path d="M6 3v6h7M10 5l4 4-4 3" fill="none" stroke="#bbb" stroke-width="1.500"/><path d="M16 3h11v14H20l-6-5z" fill="#bbb"/><path d="M14 12h6v6z" fill="#ddd"/>`)}
        ${icon(24, 20, svg`<path d="M4 3h16v14h-9l-7-6z" fill="#bbb"/><path d="M4 11h7v7z" fill="#ddd" stroke="#444"/>`)}
        ${icon(22, 20, svg`<path d="M3 5h17M8 4V2h7v2M5 7l1 11h11l1-11" fill="none" stroke="#bbb" stroke-width="1.800"/><path d="M9 8v9M11.500 8v9M14 8v9" stroke="#bbb" stroke-width="1.300"/>`)}
        ${icon(20, 20, svg`<path d="M4 20h16M8 16h12M12 12h8M16 8h4" stroke="#999" stroke-width="2" stroke-dasharray="2 1.500"/>`)}
      </div>
    </div>`;
  }

  private colorPanel() {
    return html`<div class="panel">
      <div class="ptabs t3"><span class="ptab on l8">${icon(8, 13, svg`<path d="M0 5h8L4 0zM0 8h8l-4 5z" fill="none" stroke="#ccc"/>`)}${fit("Color", 38, 14, "ui bold")}</span><span class="ptab">${fit("Guía de", 50, 14, "ui dim")}</span><span class="ptab">${fit("OpenType", 68, 14, "ui dim")}</span><span class="ptab">${fit("Párrafo", 52, 14, "ui dim")}</span><span class="ptab last">${menuIco}</span></div>
      <div class="hexrow">${icon(61, 22, svg`<rect x=".750" y=".750" width="59.500" height="20.500" fill="#fff" stroke="#222" stroke-width="1.500"/><path d="M20 1h20v20H20z"/><path d="M2 20L19 2" stroke="red" stroke-width="2.500"/>`, "sw")}${fit("#", 11, 14, "ui bold")}${icon(7, 4, nothing)}<span class="combo w82 gray"><span class="p8 vc">${fit("ffffff", 28, 14, "ui dark")}</span></span></div>
      <div class="spectrum"></div>
    </div>`;
  }

  private taskbar() {
    return html`<div class="taskbar">
      <div class="cell sys">${icon(48, 48, svg`<path d="M8 12l13-2v13H8zM23 10l16-2.500V23H23zM8 25h13v13L8 36zM23 25h16v15.500L23 38z" fill="#fff"/>`)}</div>
      <div class="cell sys">${icon(48, 48, svg`<path d="M8 9v6h19V9M8 18.500h19v14H8zM8 41v-5h19v5M35 9v4M35 23v16" fill="none" stroke="#fff" stroke-width="2"/><path d="M33 17h4v5h-4z" fill="#fff"/>`)}</div>
      ${apps.map((a) => html`<div class="cell ${a.u ?? ""}">${icon(48, 48, a.g)}${a.u ? html`<span class="bar"></span>` : nothing}</div>`)}
      <div class="tray">${icon(600, 60, svg`
        <g transform="translate(-2620 -1999)" fill="none" stroke="#fff" stroke-width="2.200">
          <circle cx="2637" cy="2026" r="5"/><path d="M2628 2044q1-12 9-12t9 12"/><circle cx="2648" cy="2022" r="4.500"/><path d="M2644 2029q10-3 12 9"/>
          <path d="M2699 2038l12-12 12 12"/>
          <path d="M2749 2025h22v16h-25v-9"/><path d="M2750 2029h13v9h-13z" fill="#fff"/><path d="M2773 2029v7M2743 2022v4M2748 2022v4M2742 2026h7v4h-7zM2745 2030v11" stroke-width="1.800"/>
          <path d="M2796 2042q-8-1-8-7t7-7q3-7 10-3 6-1 8 6" fill="#fff"/><circle cx="2810" cy="2038" r="8" fill="#fff"/><path d="M2805 2037q4-6 9-2v-3M2815 2040q-4 5-9 2v3" stroke="#2368c4"/>
          <path d="M2840 2044q0-20 22-20M2846 2044q0-14 16-14M2852 2044q0-8 10-8" stroke-width="1.800"/><circle cx="2860" cy="2042" r="2.500" fill="#fff" stroke="none"/>
          <path d="M2881 2028h5l6-6v22l-6-6h-5z"/><path d="M2897 2028q3 5 0 10M2902 2025q5 8 0 16"/><path d="M2907 2021q7 12 0 24" stroke="#888"/>
          <path d="M3153 2018h30v25h-18l-6 6v-6h-6z" fill="#fff" stroke="none"/><path d="M3158 2023h20M3158 2029h20M3158 2035h14" stroke="#20170f"/>
          <circle cx="3182" cy="2047" r="15" fill="#333" stroke="#777"/><path d="M3222 1994v77" stroke="#777" stroke-width="1.500"/>
        </g>
        <text class="clock" x="312" y="42.500" font-size="21" textLength="40" lengthAdjust="spacingAndGlyphs">CAT</text>
        <text class="clock" x="412" y="24" font-size="22" textLength="52" lengthAdjust="spacingAndGlyphs">12:32</text>
        <text class="clock" x="380.500" y="59.500" font-size="22" textLength="117" lengthAdjust="spacingAndGlyphs">05/07/2018</text>
        <text class="clock" x="557" y="55" font-size="20" font-weight="700">3</text>`)}</div>
    </div>`;
  }

  private notes() {
    const head = (x: number, y: number) => svg`<path d="M${x - 21.5} ${y}l15.500 15h12l15.500-15v18.500L${x} ${y + 39.5} ${x - 21.5} ${y + 18.5}z" fill="#0ff"/>`;
    return html`<svg class="overlay" width="3508" height="2480" viewBox="0 0 3508 2480">
      ${st("interfaz", 320, 207, 374, 99, "cy navy")}
      <g fill="none" stroke="#0ff" stroke-width="12.400" stroke-linejoin="miter">
        <path d="M971.200 409V330H3029.800V495"/>
        <rect x="332.500" y="392" width="766" height="73.500" stroke-width="10.800"/>
        <rect x="278.500" y="539" width="159.500" height="833.500" stroke-width="12"/>
        <rect x="2811" y="1032" width="419.500" height="668.500" stroke-width="12"/>
        <path d="M2865 1263V1438.300H2288.200V1560"/><path d="M2898.600 1263V1477.700H2436V1684"/><path d="M3136 1649V1567.500H2719.600V1600"/>
      </g>
      ${head(3029.8, 473)}${head(2288.2, 1538.8)}${head(2436, 1661.7)}${head(2719.6, 1578.4)}
      ${st("distintos paneles", 974, 303, 393, 49, "cy")}
      ${st("herramientas", 483, 671.5, 309, 49, "cy")}${st("de edición", 484, 731, 232, 49, "cy")}
      ${st("visibilidad", 2135, 1668, 242, 49, "cy")}${st("añadir", 2626, 1668, 152, 49, "cy")}${st("bloqueo", 2325, 1778, 186, 49, "cy")}
      ${st("¡ el orden de las capas importa !", 1951, 1892, 734, 49, "cy")}
    </svg>`;
  }

  render() {
    const items: [string, number][] = [["Archivo", 62], ["Edición", 59], ["Objeto", 55], ["Texto", 44], ["Seleccionar", 93], ["Efecto", 50], ["Ver", 27]];
    return html`<svg class="defs" width="0" height="0"><defs>
      <linearGradient id="tg"><stop stop-color="#3a3a3a"/><stop offset="1" stop-color="#bbb"/></linearGradient>
      <linearGradient id="wg"><stop stop-color="#fff"/><stop offset="1" stop-color="#111"/></linearGradient>
    </defs></svg>
    <div class="page">
      <div class="title"></div>
      <div class="shot">
        <div class="menubar">
          <div class="menus">${fit("Ai", 27, 30, "logo")}${items.map(([t, w]) => fit(t, w, 18, "menu"))}<span class="ventana">${fit("Ventana", 65, 18, "menu teal")}</span>${icon(1, 1, nothing)}</div>
          <div class="apptools">${fit("Ayuda", 52, 18, "menu")}${icon(36, 10, nothing)}<span class="br">${fit("Br", 13, 12, "ui bold")}</span>${icon(27, 24, svg`<path d="M1 1h25v22H1z" fill="#222" stroke="#ccc" stroke-width="2"/><path d="M4 4h11v14H4zM17 4h6v6h-6zM17 12h6v6h-6z" fill="#ccc"/>`)}${down}</div>
          <div class="ws">${fit("Aspectos esenciales", 160, 17.5, "menu")}${down}</div>
          <div class="winbtns"><span>${icon(16, 14, svg`<path d="M0 8h16v4H0z" fill="#ddd"/>`)}</span><span>${icon(16, 14, svg`<path d="M2 2h12v9H2z" fill="none" stroke="#ddd" stroke-width="3.500"/>`)}</span><span>${icon(16, 14, svg`<path d="M1 1l14 12M15 1L1 13" stroke="#ddd" stroke-width="3.500"/>`)}</span></div>
        </div>
        ${this.control()}
        <div class="body">
          <div class="main">
            <div class="doctabs"><span class="doctab on">${fit("plantilla_mapas y gráficos.ai al 66.67% (RGB/Previsualizar)", 463, 14, "ui bold")}${cross}</span><span class="doctab idle">${fit("illustrator_snapshots.ai* al 25% (RGB/Previsualizar)", 406, 14, "ui dim")}${cross}</span></div>
            <div class="work">
              <div class="canvas">
                <svg class="boards" width="868" height="616" viewBox="900 849 868 616">${board1}</svg>
                <svg class="boards" width="868" height="616" viewBox="1786 849 868 616">${board2}</svg>
                ${this.toolbox()}
              </div>
              <div class="vs">${icon(14, 9, svg`<path d="M0 9h14L7 0z" fill="#ddd"/>`)}<span class="vthumb"></span>${icon(14, 10, svg`<path d="M0 0h14L7 10z" fill="#ddd"/>`)}</div>
            </div>
            <div class="status">
              <span class="gray zoomf">${fit("66.67%", 51, 14, "ui dark")}</span><span>${down}</span>
              <span>${icon(14, 12, svg`<path d="M1 0v12M13 0v12L5 6z" fill="#ccc" stroke="#ccc"/>`)}</span><span>${icon(8, 12, svg`<path d="M7 0v12L0 6z" fill="#ccc"/>`)}</span>
              <span class="gray p8">${fit("2", 8, 14, "ui dark")}</span><span class="p8">${down}</span>
              <span>${icon(8, 12, svg`<path d="M0 0v12l8-6z" fill="#777"/>`)}</span><span>${icon(14, 12, svg`<path d="M0 0v12l8-6zM12 0v12" fill="#777" stroke="#777"/>`)}</span>
              <span class="sel1">${fit("Selección", 62, 14)}</span><span class="p8">${icon(10, 14, svg`<path d="M1 1l9 6-9 6z" fill="#ddd"/>`)}</span>
              <span class="hs">${icon(10, 14, svg`<path d="M10 0v14L0 7z" fill="#ddd"/>`)}<span class="hthumb"></span>${icon(10, 14, svg`<path d="M0 0v14l10-7z" fill="#ddd"/>`)}</span><span></span>
            </div>
          </div>
          <div class="dock">
            <div class="dhead">${icon(12, 9, svg`<path d="M0 0v9l6-4.500zM6 0v9l6-4.500z" fill="#bbb"/>`)}</div>
            ${this.strokePanel()}${this.layersPanel()}${this.colorPanel()}
          </div>
        </div>
        <div class="frame"></div>
        ${this.taskbar()}
      </div>
      ${this.notes()}
    </div>`;
  }
}
